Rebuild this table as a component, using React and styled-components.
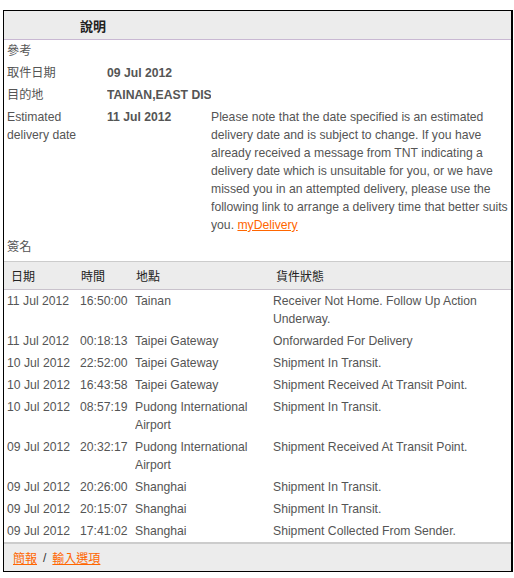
import React from "react";
import styled, { createGlobalStyle } from "styled-components";

const Global = createGlobalStyle`
  html, body { margin: 0; padding: 0; background: #fff; }
  body { font-family: "Liberation Sans", Arial, "Noto Sans CJK TC", sans-serif; font-size: 12.2px; color: #555; }
`;

const Box = styled.div`
  margin: 10px 0 0 3px;
  width: 507px;
  border: 1px solid #000;
  border-right-width: 2px;
  background: #fff;
`;

const TitleBar = styled.div`
  height: 28px;
  background: #ececec;
  border-bottom: 1px solid #c9b8d3;
  display: flex;
  align-items: center;
  padding-left: 76px;
  font-weight: bold;
  font-size: 13px;
  color: #222;
`;

const Info = styled.div`
  display: grid;
  grid-template-columns: 100px 104px 1fr;
  padding: 0 0 3px 3px;
  line-height: 18px;
`;

const Cell = styled.div`
  padding: 2px ${(p) => p.$pr || 0}px 2px 0;
  white-space: ${(p) => (p.$nowrap ? "nowrap" : "normal")};
  overflow: hidden;
  font-weight: ${(p) => (p.$bold ? "bold" : "normal")};
  grid-column: ${(p) => p.$span || "auto"};
`;

const Link = styled.a`
  color: #ff6600;
  text-decoration: underline;
`;

const Table = styled.div`
  border-top: 1px solid #cccccc;
`;

const HeadRow = styled.div`
  display: grid;
  grid-template-columns: 73px 55px 138px 1fr;
  padding-left: 3px;
  height: 27px;
  align-items: center;
  background: #ececec;
  border-bottom: 1px solid #c9c2cc;
  color: #222;
  font-size: 12px;
`;

const HeadCell = styled.div`
  padding-left: ${(p) => p.$pad || 0}px;
`;

const Row = styled.div`
  display: grid;
  grid-template-columns: 73px 55px 138px 1fr;
  padding-left: 3px;
  line-height: 18px;
`;

const Footer = styled.div`
  border-top: 2px solid #cccccc;
  background: #ececec;
  height: 27px;
  display: flex;
  align-items: center;
  padding-left: 9px;
  gap: 6px;
  font-size: 12px;
  color: #333;
`;

const rows = [
  ["11 Jul 2012", "16:50:00", "Tainan", "Receiver Not Home. Follow Up Action Underway."],
  ["11 Jul 2012", "00:18:13", "Taipei Gateway", "Onforwarded For Delivery"],
  ["10 Jul 2012", "22:52:00", "Taipei Gateway", "Shipment In Transit."],
  ["10 Jul 2012", "16:43:58", "Taipei Gateway", "Shipment Received At Transit Point."],
  ["10 Jul 2012", "08:57:19", "Pudong International Airport", "Shipment In Transit."],
  ["09 Jul 2012", "20:32:17", "Pudong International Airport", "Shipment Received At Transit Point."],
  ["09 Jul 2012", "20:26:00", "Shanghai", "Shipment In Transit."],
  ["09 Jul 2012", "20:15:07", "Shanghai", "Shipment In Transit."],
  ["09 Jul 2012", "17:41:02", "Shanghai", "Shipment Collected From Sender."],
];

export default function App() {
  return (
    <>
      <Global />
      <Box>
        <TitleBar>說明</TitleBar>
        <Info>
          <Cell $span="1 / -1">參考</Cell>
          <Cell>取件日期</Cell>
          <Cell $bold $nowrap>09 Jul 2012</Cell>
          <Cell />
          <Cell>目的地</Cell>
          <Cell $bold $nowrap>TAINAN,EAST DIS</Cell>
          <Cell />
          <Cell $pr={10}>Estimated delivery date</Cell>
          <Cell $bold $nowrap>11 Jul 2012</Cell>
          <Cell>
            Please note that the date specified is an estimated delivery date and is subject to change. If you have already received a message from TNT indicating a delivery date which is unsuitable for you, or we have missed you in an attempted delivery, please use the following link to arrange a delivery time that better suits you.{" "}
            <Link href="#">myDelivery</Link>
          </Cell>
          <Cell $span="1 / -1">簽名</Cell>
        </Info>
        <Table>
          <HeadRow>
            <HeadCell $pad={4}>日期</HeadCell>
            <HeadCell $pad={1}>時間</HeadCell>
            <HeadCell $pad={1}>地點</HeadCell>
            <HeadCell $pad={3}>貨件狀態</HeadCell>
          </HeadRow>
          {rows.map((r, i) => (
            <Row key={i}>
              <Cell>{r[0]}</Cell>
              <Cell>{r[1]}</Cell>
              <Cell>{r[2]}</Cell>
              <Cell>{r[3]}</Cell>
            </Row>
          ))}
        </Table>
        <Footer>
          <Link href="#">簡報</Link>
          <span>/</span>
          <Link href="#">輸入選項</Link>
        </Footer>
      </Box>
    </>
  );
}
